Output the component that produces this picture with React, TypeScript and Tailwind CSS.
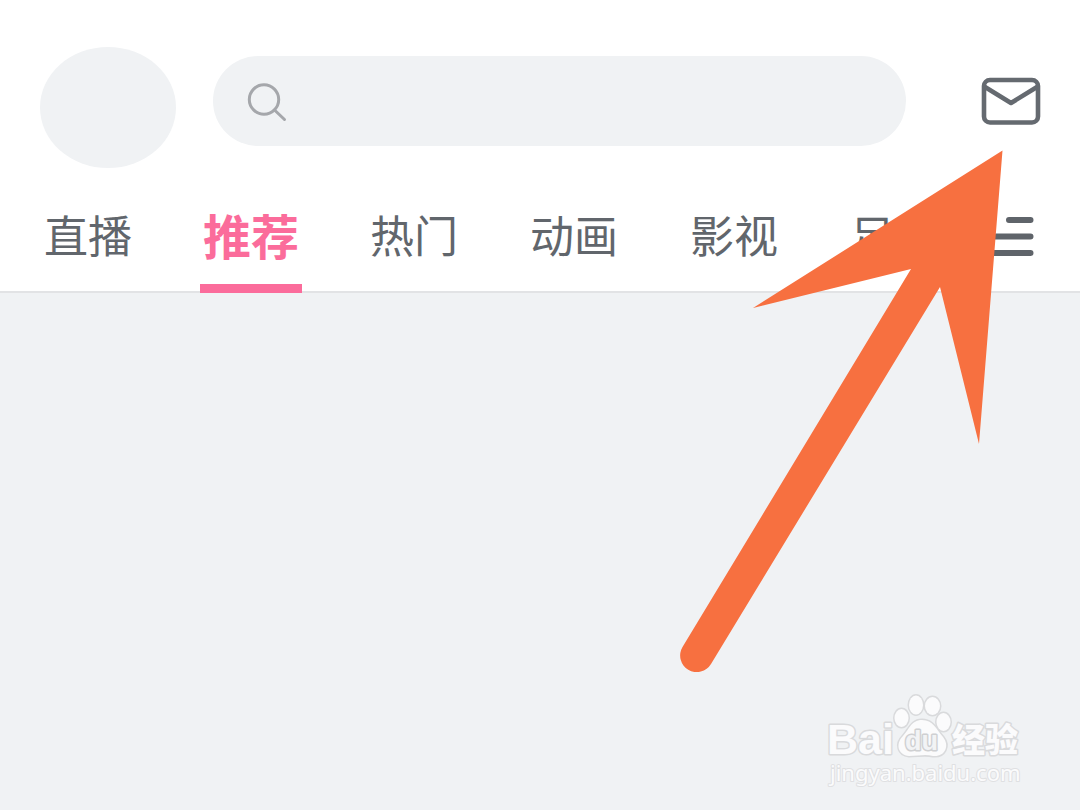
import React from 'react';

const tabs = ['直播', '推荐', '热门', '动画', '影视', '足球'];
const activeTab = '推荐';

const SearchIcon = () => (
  <svg width="44" height="44" viewBox="0 0 44 44" fill="none" stroke="#a5a7ab" strokeWidth="3" strokeLinecap="round">
    <circle cx="19" cy="20.500" r="14.700" />
    <path d="M29.500 31 L39.500 40.500" />
  </svg>
);

const MailIcon = () => (
  <svg width="60" height="48" viewBox="0 0 60 48" fill="none" stroke="#656a70" strokeWidth="4.600" strokeLinejoin="round">
    <rect x="3" y="3" width="54" height="42.500" rx="6" />
    <path d="M4 10 L30 26 L56 10" />
  </svg>
);

const MenuIcon = () => (
  <svg width="50" height="40" viewBox="0 0 50 40" fill="none" stroke="#5f646a" strokeWidth="6" strokeLinecap="round">
    <path d="M22 4H43.500M4 20.500H43.500M4 37H43.500" />
  </svg>
);

const Header = () => (
  <header className="border-b-2 border-[#e2e3e5] bg-white">
    <div className="flex items-start pt-[47px] pr-[39px] pl-10">
      <button aria-label="Profile" className="h-[121px] w-[136px] shrink-0 rounded-[50%] bg-[#f0f2f4]" />
      <label className="mt-[9px] ml-[37px] flex h-[90px] flex-1 items-center rounded-full bg-[#f0f2f4] pl-8">
        <SearchIcon />
        <input type="search" aria-label="Search" className="h-full min-w-0 flex-1 bg-transparent px-4 text-3xl outline-none" />
      </label>
      <button aria-label="Messages" className="mt-[30px] ml-[75px] shrink-0">
        <MailIcon />
      </button>
    </div>
    <div className="flex h-[123px] items-stretch justify-between pr-[43px] pl-10">
      <nav className="flex gap-16">
        {tabs.map((tab) =>
          tab === activeTab ? (
            <button
              key={tab}
              aria-current="page"
              className="relative flex px-[3px] pt-[30px] text-[48px] leading-[72px] font-bold whitespace-nowrap text-[#fb6c9b]"
            >
              {tab}
              <span className="absolute inset-x-0 -bottom-0.5 h-[9px] bg-[#fb6c9b]" />
            </button>
          ) : (
            <button key={tab} className="flex px-1 pt-[30px] text-[44px] leading-[72px] whitespace-nowrap text-[#61666c]">
              {tab}
            </button>
          )
        )}
      </nav>
      <button aria-label="More channels" className="flex items-start pt-[48px]">
        <MenuIcon />
      </button>
    </div>
  </header>
);

const Arrow = () => (
  <svg
    className="pointer-events-none absolute top-[150px] right-[77px]"
    width="326"
    height="524"
    viewBox="677 150 326 524"
    fill="#f77040"
  >
    <path d="M1002.500 150.500 L753 308 L911 269 L682.500 647 A16.300 16.300 0 1 0 711 664 L940 287 L979 444 Z" />
  </svg>
);

const Watermark = () => (
  <svg
    className="pointer-events-none absolute right-[54px] bottom-[20px]"
    width="202"
    height="100"
    viewBox="824 690 202 100"
    fill="#fbfbfc"
    stroke="#d9dadc"
    strokeWidth="3"
    strokeLinejoin="round"
    paintOrder="stroke"
    fontFamily="'Liberation Sans', 'Noto Sans CJK SC', sans-serif"
  >
    <text x="827" y="754" fontSize="43" fontWeight="700">Bai</text>
    <ellipse cx="901.500" cy="718" rx="7" ry="9" />
    <ellipse cx="916" cy="705" rx="7" ry="9.500" />
    <ellipse cx="932.500" cy="706" rx="7.500" ry="9" />
    <ellipse cx="943.500" cy="722" rx="7" ry="9" />
    <path d="M922 720 C911 720 909 730 903 736 C895 744 898 755 909 756 C918 756 925 754 933 756 C945 757 950 746 943 737 C936 729 933 720 922 720 Z" />
    <text x="905" y="750" fontSize="27" fontWeight="700" fill="#f2f3f5" stroke="#cfd0d2">du</text>
    <text x="952" y="752" fontSize="33" fontWeight="900">经验</text>
    <text x="830" y="781" fontSize="22" strokeWidth="2" stroke="#dfe0e2" fontFamily="'Noto Sans', sans-serif">jingyan.baidu.com</text>
  </svg>
);

const App = () => {
  return (
    <div className="relative min-h-screen overflow-hidden bg-[#f0f2f4] font-['Noto_Sans_CJK_SC',sans-serif]">
      <Header />
      <main />
      <Arrow />
      <Watermark />
    </div>
  );
};

export default App;
